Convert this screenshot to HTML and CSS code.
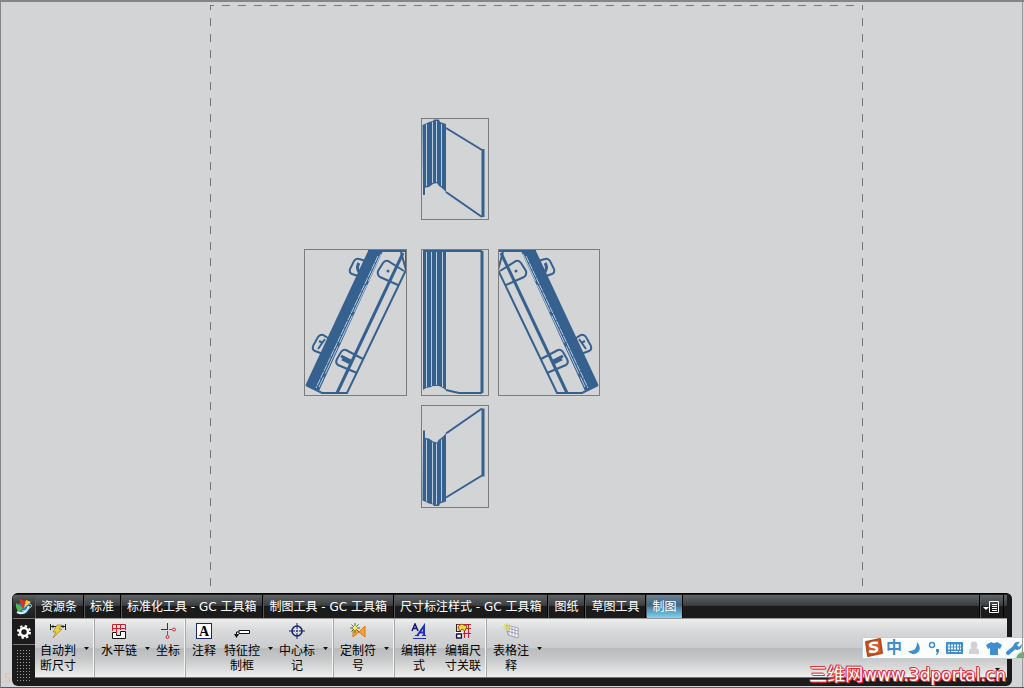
FILE: index.html
```
<!DOCTYPE html>
<html lang="zh-CN">
<head>
  <meta charset="UTF-8">
  <title>制图</title>
  <meta name="viewport" content="width=device-width, initial-scale=1.0">
  <link rel="stylesheet" href="styles.css">
</head>
<body>
  <main class="canvas">
    <div class="sheet"></div>

    <svg class="view view-top" viewBox="0 0 68 102">
      <g id="book-end">
        <path class="solid" d="M1.5 7L6 5L8 4L12 3L13 1.5H18L19 4L22 5L25 6V74L21 70L18 68L16 65L12 66L8 69L2 70Z"/>
        <path class="gap" d="M5.500 6V68M11.500 4V65M15.500 3V64M20.500 6V68"/>
        <path class="line" d="M3 68V77M25 10L61 32M61 99L25 74"/>
        <path class="bold" d="M62 31V99"/>
      </g>
    </svg>

    <svg class="view view-left" viewBox="0 0 103 147">
      <g id="book-side">
        <path class="solid" d="M64 2H79L15 142L1.500 136Z"/>
        <path class="gap" d="M74 7L12 139" stroke-dasharray="7 1"/>
        <path class="gap" d="M77 5L15 138" stroke-dasharray="30 4"/>
        <path class="line" d="M64 2H102V21L43 144H18L2 136M97 3L102 21"/>
        <path class="bold" d="M99 4L33 144"/>
        <path class="line" d="M100 22L84 12Q81 11 79 14L74 22Q73 26 76 28L94 36"/>
        <circle class="solid" cx="84" cy="22" r="1.500"/>
        <path class="line" d="M59 110L42 101Q39 100 37 103L33 110Q31 114 34 116L53 124"/>
        <path class="bold" d="M37 107L47 112M38 110L46 114"/>
        <path class="line" d="M62 12L55 10Q52 9 50 12L46 20Q45 24 48 25L57 28"/>
        <path class="bold" d="M55 14Q52 18 55 23"/>
        <path class="line" d="M24 89L19 86Q16 85 14 88L9 97Q8 101 11 102L19 105M21 90L14 100M15 92L19 94"/>
      </g>
    </svg>

    <svg class="view view-front" viewBox="0 0 68 147">
      <path class="solid" d="M2 2H25V141L22 139L18 137H12L10 138L5 139L2 141Z"/>
      <path class="gap" d="M5.500 3V138M10.500 3V137M15.500 3V136M21.500 3V138"/>
      <path class="line" d="M2 2H61M61 144H38L25 141"/>
      <path class="bold" d="M61 2V144"/>
    </svg>

    <svg class="view view-right" viewBox="0 0 102 147">
      <use href="#book-side" transform="translate(102 0) scale(-1 1)"/>
    </svg>

    <svg class="view view-bottom" viewBox="0 0 68 102">
      <use href="#book-end" transform="translate(0 102) scale(1 -1)"/>
    </svg>
  </main>

  <section class="dock">
    <div class="rail">
      <button class="rail-logo" aria-label="NX">
        <svg width="18" height="18" viewBox="0 0 18 18">
          <circle cx="8" cy="10" r="6" fill="#3478c8"/>
          <path d="M1 5L8 10L4 14Q0 10 1 5Z" fill="#52b848"/>
          <path d="M4 1L11 3L8 11Z" fill="#e03020"/>
          <path d="M11 2L16 4L9 10Z" fill="#ffd43a"/>
          <path d="M2 14Q10 18 14 8" fill="none" stroke="#d8f2ff" stroke-width="2"/>
          <path d="M13 6Q18 6 16 9Q12 13 7 13" fill="none" stroke="#9adcf5"/>
        </svg>
      </button>
      <button class="rail-gear" aria-label="设置">
        <svg width="16" height="16" viewBox="0 0 16 16">
          <circle cx="8" cy="8" r="4" fill="none" stroke="#fff" stroke-width="2.500"/>
          <circle cx="8" cy="8" r="6" fill="none" stroke="#fff" stroke-width="2" stroke-dasharray="2.400 2.310"/>
        </svg>
      </button>
      <div class="grip"></div>
    </div>

    <div class="panel">
      <nav class="tabs">
        <button>资源条</button>
        <button>标准</button>
        <button>标准化工具 - GC 工具箱</button>
        <button>制图工具 - GC 工具箱</button>
        <button>尺寸标注样式 - GC 工具箱</button>
        <button>图纸</button>
        <button>草图工具</button>
        <button class="active">制图</button>
        <button class="tab-menu" aria-label="菜单">
          <svg width="17" height="14" viewBox="0 0 17 14">
            <path d="M0 7H6L3 10Z" fill="#fff"/>
            <path d="M6.500 1.500H15.500V12.500H6.500ZM9 4.500H14M9 6.500H14M9 8.500H14M9 10.500H14" fill="none" stroke="#fff"/>
          </svg>
        </button>
      </nav>

      <div class="ribbon">
        <div class="group">
          <button class="tool">
            <svg viewBox="0 0 16 16">
              <path d="M.5 1V7M15.500 1V7M1 3.500H15M3 2V5M13 2V5" fill="none" stroke="#222"/>
              <path d="M7 2H12L9 6H12L3 15L6 9H3Z" fill="#f0d040" stroke="#8a7420" stroke-width=".6"/>
            </svg>
            <span>自动判断尺寸</span>
          </button>
          <button class="more" aria-label="更多尺寸"></button>
        </div>

        <div class="group">
          <button class="tool">
            <svg viewBox="0 0 16 16">
              <path d="M1.500 15.500V9.500H5.500V12.500H9.500V8.500H14.500V15.500Z" fill="#fff" stroke="#111"/>
              <path d="M1.500 8V1.500H14.500V7M5.500 2V11M9.500 2V7M1 5.500H15" fill="none" stroke="#c8202c"/>
            </svg>
            <span>水平链</span>
          </button>
          <button class="more" aria-label="更多链"></button>
          <button class="tool">
            <svg viewBox="0 0 16 16">
              <path d="M7.500 0V6M1 6.500H8" fill="none" stroke="#2228c0"/>
              <path d="M9 6.500H12M7.500 8V12" fill="none" stroke="#d03040"/>
              <circle cx="14" cy="6.500" r="1.500" fill="none" stroke="#d03040"/>
              <circle cx="7.500" cy="14" r="1.500" fill="none" stroke="#d03040"/>
            </svg>
            <span>坐标</span>
          </button>
        </div>

        <div class="group">
          <button class="tool">
            <svg viewBox="0 0 16 16">
              <rect x=".5" y=".5" width="15" height="15" fill="#fff" stroke="#20206c"/>
              <text class="glyph" x="8" y="13" text-anchor="middle">A</text>
            </svg>
            <span>注释</span>
          </button>
          <button class="tool">
            <svg viewBox="0 0 16 16">
              <path d="M5 7.500H15.500V10.500H5ZM5 9H2.500V13" fill="#fff" stroke="#111"/>
              <path d="M0 11H5L2.500 15Z" fill="#111"/>
            </svg>
            <span>特征控制框</span>
          </button>
          <button class="more" aria-label="更多注释"></button>
          <button class="tool">
            <svg viewBox="0 0 16 16">
              <circle cx="8" cy="8" r="5" fill="none" stroke="#15206c" stroke-width="1.500"/>
              <path d="M8 0V6M8 10V16M0 8H6M10 8H16M7 8H9M8 7V9" stroke="#15206c"/>
            </svg>
            <span>中心标记</span>
          </button>
          <button class="more" aria-label="更多中心线"></button>
        </div>

        <div class="group">
          <button class="tool">
            <svg viewBox="0 0 16 16">
              <path d="M3 4L9 9L15 3V14L9 9L3 14Z" fill="#f7a33c" stroke="#d87818"/>
              <path d="M5 0V10M0 5H10M1.500 1.500L8.500 8.500M8.500 1.500L1.500 8.500" stroke="#4f7038"/>
              <circle cx="5" cy="5" r="2" fill="#f4f45a"/>
            </svg>
            <span>定制符号</span>
          </button>
          <button class="more" aria-label="更多符号"></button>
        </div>

        <div class="group">
          <button class="tool">
            <svg viewBox="0 0 16 16">
              <path d="M1 8L4 1L7 8M2 5.500H6" fill="none" stroke="#15156c" stroke-width="1.500"/>
              <path d="M6 13L13 3V13M9 9.500H13" fill="none" stroke="#2030c8" stroke-width="2"/>
              <path d="M4 12.500H8M11 12.500H15M2 15.500H15" stroke="#2030c8"/>
            </svg>
            <span>编辑样式</span>
          </button>
          <button class="tool">
            <svg viewBox="0 0 16 16">
              <path d="M1 1.500H16M8 5.500H16M6 10.500H16M9.500 1V15M13.500 1V15" stroke="#c02030"/>
              <path d="M1.500 1V9M1 8.500H6" fill="none" stroke="#222"/>
              <path d="M3 4L6 1L12 3L10 8L7 6L5 8Z" fill="#f6d43c" stroke="#8a5b14"/>
              <path d="M0 9H8V16H0Z" fill="#fff"/>
              <rect x="1.500" y="11" width="5" height="4" fill="#fff" stroke="#101048" stroke-width="1.500"/>
            </svg>
            <span>编辑尺寸关联</span>
          </button>
        </div>

        <div class="group last">
          <button class="tool">
            <svg viewBox="0 0 16 16">
              <path d="M3 2L15 5V15L5 12ZM4 5L15 8M4 8L15 11M6 3V12M9 4V13M12 5V14" fill="#fff" stroke="#8c8ca8" stroke-width=".8"/>
              <path d="M4 0V8M0 4H8M1 1L7 7M7 1L1 7" stroke="#d8d850"/>
            </svg>
            <span>表格注释</span>
          </button>
          <button class="more" aria-label="更多表格"></button>
        </div>
      </div>
    </div>
  </section>

  <!-- input method bar, floats over the dock -->
  <div class="ime">
    <button aria-label="搜狗">
      <svg viewBox="0 0 20 20">
        <path d="M2 4L16 1L18 15L4 18Z" fill="#d4572a" stroke="#b84a20" stroke-linejoin="round" stroke-width="2"/>
        <path d="M14 5Q7 4 6 7Q6 9 10 9Q14 10 13 12Q11 15 5 13" fill="none" stroke="#fff" stroke-width="2.500"/>
      </svg>
    </button>
    <button class="lang">中</button>
    <button aria-label="半角">
      <svg viewBox="0 0 20 20"><path d="M13 4Q19 11 13 15Q8 18 4 13Q13 14 13 4Z" fill="#3f8fd0"/></svg>
    </button>
    <button aria-label="标点">
      <svg viewBox="0 0 20 20">
        <circle cx="8" cy="7" r="2.500" fill="none" stroke="#3f8fd0" stroke-width="1.500"/>
        <path d="M12 11H15V14L13 17H12L13 14H12Z" fill="#3f8fd0"/>
      </svg>
    </button>
    <button aria-label="软键盘">
      <svg viewBox="0 0 20 20">
        <rect x="2" y="4" width="17" height="12" rx="1" fill="#3f8fd0"/>
        <path d="M4 7.500H17M4 10.500H17" stroke="#fff" stroke-width="2" stroke-dasharray="2 1"/>
        <path d="M4 13.500H6M7 13.500H14M15 13.500H17" stroke="#fff"/>
      </svg>
    </button>
    <button aria-label="账户">
      <svg viewBox="0 0 20 20">
        <circle cx="10" cy="7" r="3.500" fill="#d2d2d2"/>
        <path d="M5 16V13Q5 10 10 10Q15 10 15 13V16Z" fill="#d2d2d2"/>
      </svg>
    </button>
    <button aria-label="皮肤">
      <svg viewBox="0 0 20 20"><path d="M7 4Q10 6 13 4L18 7L16 11L14 10V17H6V10L4 11L2 7Z" fill="#3f8fd0"/></svg>
    </button>
    <button aria-label="工具">
      <svg viewBox="0 0 20 20">
        <path d="M4 15L11 9" stroke="#3f8fd0" stroke-width="4" stroke-linecap="round"/>
        <path d="M16 4L13 7L15 9L18 6Q18 12 12 12Q8 9 10 6Q12 3 16 4Z" fill="#3f8fd0"/>
        <circle cx="20" cy="22" r="9" fill="#59b56c" stroke="#e4f2e6" stroke-width="2"/>
      </svg>
    </button>
  </div>
  <div class="overflow-arrow"></div>
  <div class="watermark"><span>三维网</span>www.3dportal.cn</div>
  <div class="corner">S</div>
</body>
</html>
```
FILE: styles.css
```
* {
  box-sizing: border-box;
}
body {
  margin: 0;
  min-height: 100vh;
  display: flex;
  flex-direction: column;
  position: relative;
  overflow: hidden;
  background: #d3d4d6;
  border-top: 2px solid #858585;
  border-left: 1px solid #858585;
  border-bottom: 1px solid #405a90;
  font-family: "DejaVu Sans", "Noto Sans CJK SC", sans-serif;
  font-size: 12px;
}
body::after {
  content: "";
  position: absolute;
  top: 0;
  right: 1px;
  bottom: 0;
  border-right: 1px solid #9a9a9c;
}
button {
  margin: 0;
  padding: 0;
  border: none;
  background: none;
  color: inherit;
  font: inherit;
  cursor: pointer;
}
svg {
  display: block;
}

/* drawing area */
.canvas {
  flex: 1;
  position: relative;
  min-height: 520px;
}
.sheet {
  position: absolute;
  left: 209px;
  top: 3px;
  bottom: 5px;
  width: 653px;
  background:
    repeating-linear-gradient(90deg, #77787a 0 8px, transparent 8px 16px) -4px 0 / 120% 1px no-repeat,
    repeating-linear-gradient(#77787a 0 8px, transparent 8px 16px) 0 -3px / 1px 120% no-repeat,
    repeating-linear-gradient(#77787a 0 8px, transparent 8px 16px) 100% -3px / 1px 120% no-repeat;
}
.view {
  position: absolute;
  outline: 1px solid #7c7c7c;
  outline-offset: -1px;
}
.view-top {
  left: 420px;
  top: 116px;
  width: 68px;
  height: 102px;
}
.view-left {
  left: 303px;
  top: 247px;
  width: 103px;
  height: 147px;
}
.view-front {
  left: 420px;
  top: 247px;
  width: 68px;
  height: 147px;
}
.view-right {
  left: 497px;
  top: 247px;
  width: 102px;
  height: 147px;
}
.view-bottom {
  left: 420px;
  top: 403px;
  width: 68px;
  height: 103px;
}
.solid {
  fill: #36618f;
}
.gap {
  fill: none;
  stroke: #b9cce0;
}
.line {
  fill: none;
  stroke: #36618f;
  stroke-width: 2px;
}
.bold {
  fill: none;
  stroke: #36618f;
  stroke-width: 3px;
}

/* toolbar dock */
.dock {
  display: flex;
  margin: 0 12px 1px 11px;
  padding: 1px 5px 0 1px;
  background: #1b1b1b;
  border-top: 1px solid #000;
  border-radius: 6px;
  overflow: hidden;
}
.rail {
  width: 22px;
  display: flex;
  flex-direction: column;
  color: #fff;
}
.rail button {
  display: flex;
  align-items: center;
  justify-content: center;
  height: 24px;
  border-bottom: 1px solid #777;
}
.rail .rail-logo {
  background: linear-gradient(#5c5e60, #2c2c2c 50%, #1b1b1b);
}
.rail .rail-gear {
  height: 26px;
}
.grip {
  flex: 1;
  margin: 5px 3px 5px 4px;
  background: linear-gradient(90deg, #999 1px, transparent 1px) 0 0 / 3px 3px;
  -webkit-mask: linear-gradient(#000 1px, transparent 1px) 0 0 / 3px 3px;
  mask: linear-gradient(#000 1px, transparent 1px) 0 0 / 3px 3px;
}
.panel {
  flex: 1;
  min-width: 0;
  padding-bottom: 8px;
}
.tabs {
  display: flex;
  height: 23px;
  background: linear-gradient(#606467, #3c3f41 45%, #1b1b1b 50%);
  color: #fff;
}
.tabs button {
  padding: 0 6px;
  border-right: 1px solid #000;
  line-height: 22px;
  white-space: nowrap;
  box-shadow: inset 1px 0 #55585a;
}
.tabs .active {
  background: linear-gradient(#6a8296, #45657d 45%, #4c86a6 55%, #80d4f2);
}
.tabs .tab-menu {
  margin-left: auto;
  margin-right: 3px;
  padding: 0 3px;
  border-left: 1px solid #000;
}
.ribbon {
  display: flex;
  height: 60px;
  border-top: 1px solid #999;
  border-bottom: 1px solid #777;
  background: linear-gradient(#ededed, #d8d9da 20%, #cbcccd 50%, #b8babb 51%, #c8c9ca 70%, #efefef);
}
.group {
  display: flex;
  align-items: flex-start;
  padding: 4px 4px 0 7px;
  border-right: 1px solid #f4f4f4;
  box-shadow: 1px 0 #aaa;
}
.group:first-child {
  padding-left: 5px;
}
.group.last {
  border: none;
  box-shadow: none;
}
.tool {
  display: flex;
  flex-direction: column;
  align-items: center;
  max-width: 36px;
  color: #000;
}
.tool + .tool {
  margin-left: 8px;
}
.tool svg {
  width: 16px;
  height: 16px;
  margin-bottom: 5px;
}
.tool span {
  line-height: 15px;
}
.glyph {
  font: bold 14px "Liberation Serif", serif;
}
.more {
  width: 5px;
  height: 3px;
  margin: 24px 0 0 8px;
  background: #111;
  clip-path: polygon(0 0, 100% 0, 50% 100%);
}
.more + .tool {
  margin-left: 6px;
}

/* floating bits over the dock */
.ime {
  position: absolute;
  right: 0;
  bottom: 28px;
  display: flex;
  height: 22px;
  padding-left: 1px;
  background: #fcfdfe;
  border: 1px solid #c4ccd4;
  border-right: none;
  overflow: hidden;
}
.ime button {
  width: 20px;
  height: 20px;
}
.ime .lang {
  color: #3f8fd0;
  font-size: 16px;
  font-weight: bold;
  line-height: 18px;
}
.overflow-arrow {
  position: absolute;
  right: 24px;
  bottom: 16px;
  width: 5px;
  height: 3px;
  background: #111;
  clip-path: polygon(0 0, 100% 0, 50% 100%);
}
.watermark {
  position: absolute;
  right: 18px;
  bottom: 2px;
  color: #fff;
  font-size: 17px;
  line-height: 20px;
  white-space: nowrap;
  text-shadow: 1px 0 #e03038, -1px 0 #e03038, 0 1px #e03038, 0 -1px #e03038, 1px 1px #e03038, -1px -1px #e03038;
}
.watermark span {
  font-size: 18px;
}
.corner {
  position: absolute;
  left: 3px;
  bottom: 2px;
  color: #ecc09c;
}
```
